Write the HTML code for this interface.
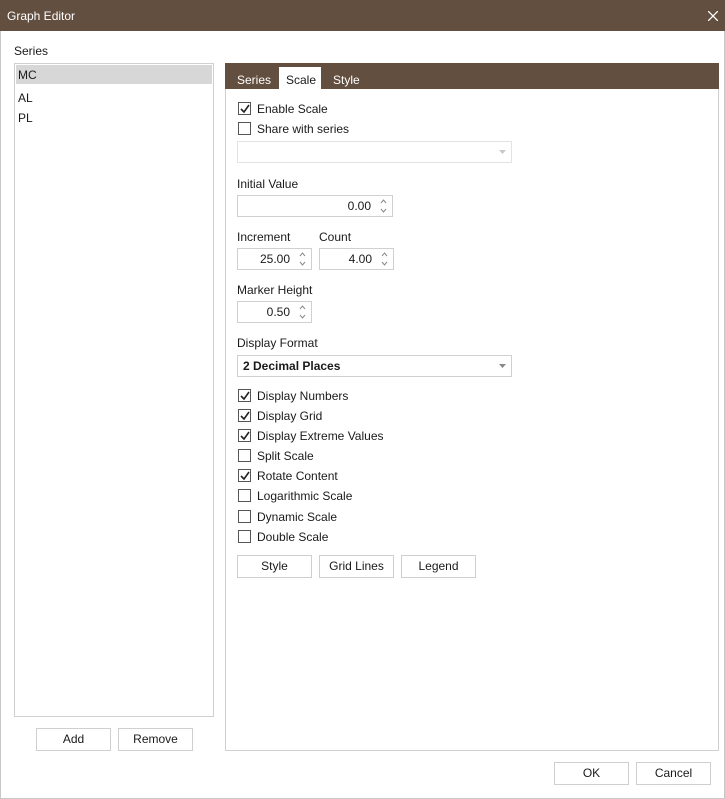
<!DOCTYPE html>
<html><head><style>
*{box-sizing:border-box;margin:0;padding:0}
body{width:725px;height:799px;background:#fff;font-family:"Liberation Sans",sans-serif;font-size:12px;color:#1a1a1a;position:relative;overflow:hidden}
.a{position:absolute}
.win{left:0;top:0;width:725px;height:799px;border:1px solid #c8c8c8}
.title{left:0;top:0;width:725px;height:31px;background:#634f40;color:#fff}
.box{border:1px solid #d0d0d0;background:#fff}
.btn{border:1px solid #cfcfcf;background:#fff;text-align:center;line-height:20px}
.cb{width:13px;height:13px;border:1px solid #555;background:#fff}
.cb svg{position:absolute;left:1px;top:1px}
.lbl{white-space:nowrap}
.spin{border:1px solid #d0d0d0;text-align:right;padding-right:21px;line-height:20px}
.arr{position:absolute;right:5px;width:7px;height:14px;top:3px}
</style></head><body>
<div class="a win"></div>
<div class="a title"><span class="a" style="left:7px;top:9px">Graph Editor</span>
<svg class="a" style="left:708px;top:11px" width="10" height="10"><path d="M0 0L10 10M10 0L0 10" stroke="#fff" stroke-width="1.3"/></svg></div>
<span class="a" style="left:14px;top:44px">Series</span>
<div class="a box" style="left:14px;top:63px;width:200px;height:654px"></div>
<div class="a" style="left:16px;top:65px;width:196px;height:19px;background:#d7d7d7"></div>
<span class="a" style="left:18px;top:68px">MC</span>
<span class="a" style="left:18px;top:91px">AL</span>
<span class="a" style="left:18px;top:111px">PL</span>
<div class="a btn" style="left:36px;top:728px;width:75px;height:23px">Add</div>
<div class="a btn" style="left:118px;top:728px;width:75px;height:23px">Remove</div>

<div class="a box" style="left:225px;top:63px;width:494px;height:688px"></div>
<div class="a" style="left:225px;top:63px;width:494px;height:26px;background:#634f40"></div>
<div class="a" style="left:279px;top:67px;width:42px;height:22px;background:#fff"></div>
<span class="a" style="left:237px;top:73px;color:#fff">Series</span>
<span class="a" style="left:286px;top:73px">Scale</span>
<span class="a" style="left:333px;top:73px;color:#fff">Style</span>

<div class="a cb" style="left:238px;top:102px"><svg width="10" height="10"><path d="M1 5L4 8L9 1" fill="none" stroke="#222" stroke-width="1.6"/></svg></div>
<span class="a" style="left:257px;top:102px">Enable Scale</span>
<div class="a cb" style="left:238px;top:122px"></div>
<span class="a" style="left:257px;top:122px">Share with series</span>
<div class="a" style="left:237px;top:141px;width:275px;height:22px;border:1px solid #e3e3e3"></div>
<svg class="a" style="left:499px;top:150px" width="7" height="4"><path d="M0 0H7L3.5 4Z" fill="#c8c8c8"/></svg>

<span class="a" style="left:237px;top:177px">Initial Value</span>
<div class="a spin" style="left:237px;top:195px;width:156px;height:22px">0.00<svg class="arr" width="7" height="14"><path d="M1 4L3.5 1L6 4M1 10L3.5 13L6 10" fill="none" stroke="#888"/></svg></div>
<span class="a" style="left:237px;top:230px">Increment</span>
<span class="a" style="left:319px;top:230px">Count</span>
<div class="a spin" style="left:237px;top:248px;width:75px;height:22px">25.00<svg class="arr" width="7" height="14"><path d="M1 4L3.5 1L6 4M1 10L3.5 13L6 10" fill="none" stroke="#888"/></svg></div>
<div class="a spin" style="left:319px;top:248px;width:75px;height:22px">4.00<svg class="arr" width="7" height="14"><path d="M1 4L3.5 1L6 4M1 10L3.5 13L6 10" fill="none" stroke="#888"/></svg></div>
<span class="a" style="left:237px;top:283px">Marker Height</span>
<div class="a spin" style="left:237px;top:301px;width:75px;height:22px">0.50<svg class="arr" width="7" height="14"><path d="M1 4L3.5 1L6 4M1 10L3.5 13L6 10" fill="none" stroke="#888"/></svg></div>
<span class="a" style="left:237px;top:336px">Display Format</span>
<div class="a" style="left:237px;top:355px;width:275px;height:22px;border:1px solid #d0d0d0;padding-left:5px;line-height:20px;font-weight:bold">2 Decimal Places</div>
<svg class="a" style="left:499px;top:364px" width="7" height="4"><path d="M0 0H7L3.5 4Z" fill="#888"/></svg>

<div class="a cb" style="left:238px;top:389px"><svg width="10" height="10"><path d="M1 5L4 8L9 1" fill="none" stroke="#222" stroke-width="1.6"/></svg></div><span class="a" style="left:257px;top:389px">Display Numbers</span>
<div class="a cb" style="left:238px;top:409px"><svg width="10" height="10"><path d="M1 5L4 8L9 1" fill="none" stroke="#222" stroke-width="1.6"/></svg></div><span class="a" style="left:257px;top:409px">Display Grid</span>
<div class="a cb" style="left:238px;top:429px"><svg width="10" height="10"><path d="M1 5L4 8L9 1" fill="none" stroke="#222" stroke-width="1.6"/></svg></div><span class="a" style="left:257px;top:429px">Display Extreme Values</span>
<div class="a cb" style="left:238px;top:449px"></div><span class="a" style="left:257px;top:449px">Split Scale</span>
<div class="a cb" style="left:238px;top:469px"><svg width="10" height="10"><path d="M1 5L4 8L9 1" fill="none" stroke="#222" stroke-width="1.6"/></svg></div><span class="a" style="left:257px;top:469px">Rotate Content</span>
<div class="a cb" style="left:238px;top:489px"></div><span class="a" style="left:257px;top:489px">Logarithmic Scale</span>
<div class="a cb" style="left:238px;top:510px"></div><span class="a" style="left:257px;top:510px">Dynamic Scale</span>
<div class="a cb" style="left:238px;top:530px"></div><span class="a" style="left:257px;top:530px">Double Scale</span>

<div class="a btn" style="left:237px;top:555px;width:75px;height:23px">Style</div>
<div class="a btn" style="left:319px;top:555px;width:75px;height:23px">Grid Lines</div>
<div class="a btn" style="left:401px;top:555px;width:75px;height:23px">Legend</div>

<div class="a btn" style="left:554px;top:762px;width:75px;height:23px">OK</div>
<div class="a btn" style="left:636px;top:762px;width:75px;height:23px">Cancel</div>
</body></html>
